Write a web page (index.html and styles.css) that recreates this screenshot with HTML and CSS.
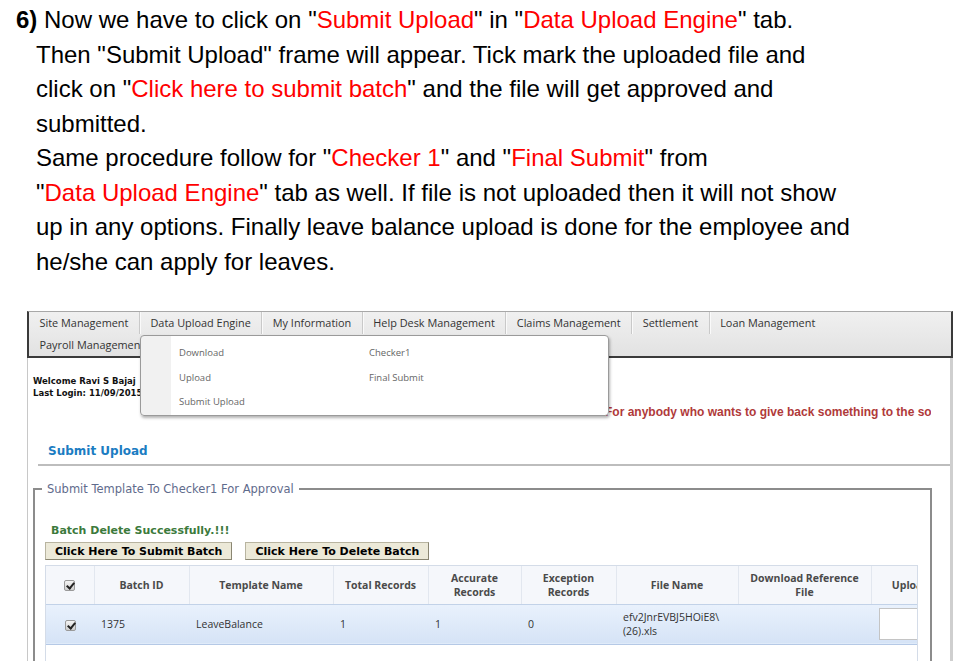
FILE: index.html
```html
<!DOCTYPE html>
<html lang="en">
<head>
    <meta charset="UTF-8">
    <title>Submit Upload</title>
    <link rel="stylesheet" href="styles.css">
</head>
<body>
    <div class="note">
        <p><b>6)</b> Now we have to click on "<span class="red">Submit Upload</span>" in "<span class="red">Data Upload Engine</span>" tab.<br>
        Then "Submit Upload" frame will appear. Tick mark the uploaded file and<br>
        click on "<span class="red">Click here to submit batch</span>" and the file will get approved and<br>
        submitted.</p>
        <p>Same procedure follow for "<span class="red">Checker 1</span>" and "<span class="red">Final Submit</span>" from<br>
        "<span class="red">Data Upload Engine</span>" tab as well. If file is not uploaded then it will not show<br>
        up in any options. Finally leave balance upload is done for the employee and<br>
        he/she can apply for leaves.</p>
    </div>

    <div class="shot">
        <div class="menu">
            <ul class="menu-row">
                <li>Site Management</li>
                <li>Data Upload Engine</li>
                <li>My Information</li>
                <li>Help Desk Management</li>
                <li>Claims Management</li>
                <li>Settlement</li>
                <li class="last">Loan Management</li>
            </ul>
            <ul class="menu-row">
                <li>Payroll Management</li>
            </ul>
            <div class="dropdown">
                <div class="dd-col">
                    <span>Download</span>
                    <span>Upload</span>
                    <span>Submit Upload</span>
                </div>
                <div class="dd-col">
                    <span>Checker1</span>
                    <span>Final Submit</span>
                </div>
            </div>
        </div>

        <div class="page">
            <div class="welcome">
                Welcome Ravi S Bajaj<br>
                Last Login: 11/09/2015 10:42:15 AM
            </div>
            <div class="quote"><span>For anybody who wants to give back something to the society</span></div>

            <h2 class="title">Submit Upload</h2>

            <fieldset class="box">
                <legend>Submit Template To Checker1 For Approval</legend>
                <p class="ok">Batch Delete Successfully.!!!</p>
                <div class="btns">
                    <button>Click Here To Submit Batch</button>
                    <button>Click Here To Delete Batch</button>
                </div>
                <div class="grid-wrap">
                    <table class="grid">
                        <colgroup>
                            <col style="width:48px">
                            <col style="width:95px">
                            <col style="width:144px">
                            <col style="width:95px">
                            <col style="width:93px">
                            <col style="width:95px">
                            <col style="width:122px">
                            <col style="width:133px">
                            <col style="width:100px">
                        </colgroup>
                        <thead>
                            <tr>
                                <th><span class="chk"></span></th>
                                <th>Batch ID</th>
                                <th>Template Name</th>
                                <th>Total Records</th>
                                <th>Accurate<br>Records</th>
                                <th>Exception<br>Records</th>
                                <th>File Name</th>
                                <th>Download Reference<br>File</th>
                                <th>Upload File</th>
                            </tr>
                        </thead>
                        <tbody>
                            <tr class="sel">
                                <td class="c"><span class="chk"></span></td>
                                <td>1375</td>
                                <td>LeaveBalance</td>
                                <td>1</td>
                                <td>1</td>
                                <td>0</td>
                                <td class="fname">efv2JnrEVBJ5HOiE8\<br>(26).xls</td>
                                <td></td>
                                <td><span class="file-box"></span></td>
                            </tr>
                            <tr class="blank">
                                <td></td><td></td><td></td><td></td><td></td><td></td><td></td><td></td><td></td>
                            </tr>
                        </tbody>
                    </table>
                </div>
            </fieldset>
        </div>
    </div>
</body>
</html>
```

FILE: styles.css
```css
*{
    margin: 0;
    padding: 0;
    box-sizing: border-box;
}
body{
    width: 958px;
    height: 662px;
    overflow: hidden;
    background-color: #ffffff;
    color: #000000;
    font-family: "Liberation Sans", Arial, sans-serif;
}
.note{
    padding: 3px 0 0 36px;
    font-size: 24px;
    line-height: 34.5px;
    white-space: nowrap;
}
.note p:first-child{
    text-indent: -20px;
}
.note b{
    font-weight: bold;
}
.red{
    color: #ff0000;
}

/* screenshot area */
.shot{
    margin: 32px 0 0 27px;
    width: 926px;
    height: 350px;
    overflow: hidden;
}
.menu{
    position: relative;
    background: linear-gradient(#f0f0f0, #e2e2e2);
    border-top: 1px solid #a8a8a8;
    border-left: 2px solid #3a3a3a;
    border-right: 2px solid #3a3a3a;
    border-bottom: 2px solid #3a3a3a;
    font-family: "Open Sans", "Noto Sans", sans-serif;
    font-size: 10.9px;
    color: #333333;
}
.menu-row{
    list-style: none;
    display: flex;
    height: 22px;
    align-items: center;
}
.menu-row li{
    padding: 0 10.5px;
    line-height: 22px;
    white-space: nowrap;
    border-right: 1px solid #c9c9c9;
    box-shadow: 1px 0 0 #fafafa;
}
.menu-row li.last,
.menu-row + .menu-row li{
    border-right: none;
    box-shadow: none;
}
.dropdown{
    position: absolute;
    left: 111px;
    top: 23px;
    width: 469px;
    height: 81px;
    display: flex;
    background: linear-gradient(90deg, #f1f1f1 30px, #ffffff 30px);
    border: 1px solid #9a9a9a;
    border-radius: 4px;
    box-shadow: 1px 2px 3px rgba(0,0,0,0.3);
    font-size: 9.5px;
    color: #666666;
    z-index: 2;
}
.dd-col{
    display: flex;
    flex-direction: column;
    padding: 10px 0 0 38px;
    gap: 11.5px;
    width: 228px;
}
.dd-col + .dd-col{
    padding-left: 0;
}

.page{
    border-left: 1px solid #c8c8c8;
    border-right: 3px solid #cfcfcf;
    height: 310px;
    font-family: "DejaVu Sans", Verdana, sans-serif;
}
.welcome{
    padding: 18px 0 0 5px;
    font-size: 8.5px;
    font-weight: bold;
    line-height: 11.5px;
    color: #111111;
}
.quote{
    margin: 6px 0 0 577px;
    width: 326px;
    overflow: hidden;
    white-space: nowrap;
    font-family: "Liberation Sans", Arial, sans-serif;
    font-size: 12px;
    font-weight: bold;
    color: #b03a3a;
}
.title{
    margin: 25px 0 0 10px;
    padding: 0 0 6px 10px;
    border-bottom: 2px solid #bdbdbd;
    font-size: 12px;
    font-weight: bold;
    color: #1b7cc2;
}
.box{
    margin: 16px 18px 0 5px;
    padding: 0 0 0 10px;
    border: 2px solid #8c8c8c;
    border-bottom: none;
    height: 200px;
}
.box legend{
    margin-left: -3px;
    padding: 0 5px;
    font-size: 11.5px;
    color: #5f6b8c;
}
.ok{
    margin: 28px 0 0 6px;
    font-size: 11px;
    font-weight: bold;
    color: #3c7a3c;
}
.btns{
    display: flex;
    gap: 13px;
    margin-top: 5px;
}
.btns button{
    height: 18px;
    padding: 0 9px;
    background-color: #ece9d8;
    border: 1px solid #b8b4a0;
    border-right-color: #8a8672;
    border-bottom-color: #8a8672;
    font-family: "DejaVu Sans", Verdana, sans-serif;
    font-size: 11px;
    font-weight: bold;
    color: #000000;
}
.grid-wrap{
    margin-top: 5px;
    width: 873px;
    overflow: hidden;
    border: 1px solid #d4dce8;
}
.grid{
    table-layout: fixed;
    border-collapse: collapse;
    width: 925px;
    font-family: "Open Sans", "Noto Sans", sans-serif;
    font-size: 10.5px;
    color: #333333;
}
.grid th{
    height: 38px;
    background-color: #f5f7fb;
    border-right: 1px solid #e2e7ef;
    border-bottom: 1px solid #c2d2e8;
    font-weight: bold;
    color: #4a4a4a;
    line-height: 14px;
    text-align: center;
}
.grid td{
    height: 40px;
    padding-left: 7px;
    text-align: left;
}
.grid td.c{
    padding-left: 0;
    text-align: center;
}
.grid tr.sel td{
    background: linear-gradient(#e9f1fc, #d5e3f6);
    border-bottom: 1px solid #b5c9e6;
}
.grid .fname{
    line-height: 14px;
}
.chk{
    display: inline-block;
    width: 11px;
    height: 11px;
    border: 1px solid #9a9a9a;
    border-radius: 2px;
    background: linear-gradient(#f4f4f4, #cfcfcf);
    position: relative;
    vertical-align: middle;
}
.chk::after{
    content: "";
    position: absolute;
    left: 3px;
    top: 0px;
    width: 3px;
    height: 6px;
    border-right: 2px solid #222222;
    border-bottom: 2px solid #222222;
    transform: rotate(40deg);
}
.file-box{
    display: block;
    width: 60px;
    height: 32px;
    margin-left: 1px;
    background-color: #ffffff;
    border: 1px solid #c4c4c4;
}
```
